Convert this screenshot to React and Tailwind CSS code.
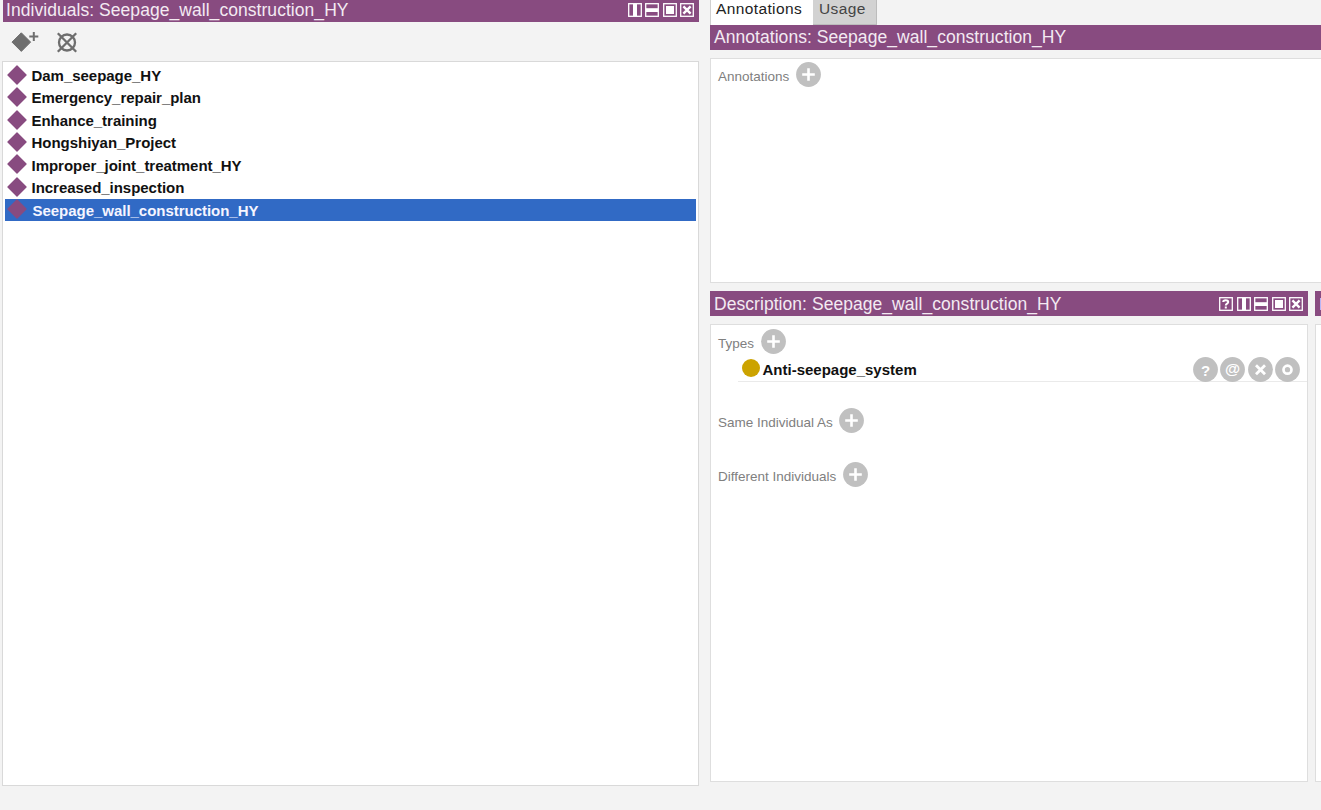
import React from 'react';

const INDIVIDUALS = [
  'Dam_seepage_HY',
  'Emergency_repair_plan',
  'Enhance_training',
  'Hongshiyan_Project',
  'Improper_joint_treatment_HY',
  'Increased_inspection',
  'Seepage_wall_construction_HY'
];

const SELECTED = 'Seepage_wall_construction_HY';

const HeaderIcon = ({ type }) => (
  <svg width="14" height="14" viewBox="0 0 14 14" fill="none" className="block shrink-0">
    <rect x="0.7" y="0.7" width="12.6" height="12.6" stroke="#fff" strokeWidth="1.3" />
    {type === 'help' && (
      <path d="M4.2 5C4.2 2.8 9.2 2.8 9.2 5C9.2 6.8 6.8 6.6 6.8 8.5M6.8 9.4V11.4" stroke="#fff" strokeWidth="2" />
    )}
    {type === 'vertical' && <rect x="5" y="1" width="4" height="12" fill="#fff" />}
    {type === 'horizontal' && <rect x="1" y="5.2" width="12" height="3.8" fill="#fff" />}
    {type === 'float' && <rect x="3" y="3" width="8" height="8" fill="#fff" />}
    {type === 'close' && <path d="M3.4 3.4L10.6 10.6M10.6 3.4L3.4 10.6" stroke="#fff" strokeWidth="2.4" />}
  </svg>
);

const PanelHeader = ({ title, icons = [], className = '' }) => (
  <div className={`flex items-center justify-between bg-[#884b80] text-[#f3eaf2] shrink-0 ${className}`}>
    <span className="text-[17.5px] leading-5 tracking-[0.05px] whitespace-pre">{title}</span>
    <div className="flex gap-[3.5px]">
      {icons.map((icon) => (
        <HeaderIcon key={icon} type={icon} />
      ))}
    </div>
  </div>
);

const CircleButton = ({ type }) => (
  <svg width="25" height="25" viewBox="0 0 25 25" fill="none" className="block shrink-0">
    <circle cx="12.5" cy="12.5" r="12.4" fill="#c0c0c0" />
    {type === 'add' && <path d="M12.5 6.2V18.8M6.2 12.5H18.8" stroke="#fff" strokeWidth="2.6" />}
    {type === 'remove' && <path d="M8 8.2L17 17.2M17 8.2L8 17.2" stroke="#fff" strokeWidth="2.8" />}
    {type === 'edit' && <circle cx="12.5" cy="12.7" r="4" stroke="#fff" strokeWidth="2.7" />}
    {type === 'help' && (
      <text x="12.5" y="19.2" textAnchor="middle" fill="#fff" fontSize="15" fontWeight="bold">?</text>
    )}
    {type === 'annotate' && (
      <text x="12.5" y="17.2" textAnchor="middle" fill="#fff" fontSize="15.5" fontWeight="bold">@</text>
    )}
  </svg>
);

const Diamond = () => (
  <svg width="20" height="20" viewBox="0 0 20 20" className="block shrink-0">
    <path d="M10 1L19 10L10 19L1 10Z" fill="#884b80" stroke="#884b80" strokeWidth="1.4" strokeLinejoin="round" />
  </svg>
);

const SectionLabel = ({ label, className = '' }) => (
  <div className={`flex items-center gap-[6.6px] h-[25px] ${className}`}>
    <span className="text-[13.5px] leading-4 text-[#808080] pt-[4px]">{label}</span>
    <CircleButton type="add" />
  </div>
);

const IndividualsPanel = () => (
  <div className="w-[697px] h-[786px] flex flex-col shrink-0">
    <PanelHeader
      title={'Individuals: ' + SELECTED}
      icons={['vertical', 'horizontal', 'float', 'close']}
      className="h-[22px] ml-px pl-[3px] pr-[5px] pb-0.5"
    />
    {/* Toolbar */}
    <div className="h-[39px] flex items-start pl-[9px] pt-[9px] gap-[16px] shrink-0">
      <svg width="29" height="24" viewBox="0 0 29 24" className="block">
        <path d="M10.3 1.8L19.6 11.1L10.3 20.4L1 11.1Z" fill="#6e6e6e" stroke="#6e6e6e" strokeLinejoin="round" />
        <path d="M22.8 1V10M18.3 5.5H27.3" stroke="#6e6e6e" strokeWidth="2" />
      </svg>
      <svg width="22" height="24" viewBox="0 0 22 24" fill="none" stroke="#6e6e6e" strokeWidth="2.3" className="block">
        <circle cx="11" cy="11.5" r="8" />
        <path d="M1.8 2.3L20.2 20.7M20.2 2.3L1.8 20.7" />
      </svg>
    </div>
    <div className="flex-1 bg-white border border-[#d9d9d9] pt-[2px] px-[2px]">
      {INDIVIDUALS.map((name) => (
        <div
          key={name}
          className={`h-[22.45px] flex items-center ${
            name === SELECTED ? 'bg-[#316ac5] text-[#f5f5ff] gap-[6px]' : 'text-[#111] gap-[5px]'
          }`}
        >
          <div className="ml-[1.5px] pb-px">
            <Diamond />
          </div>
          <span className="text-[15px] leading-5 font-bold tracking-[-0.03px] pt-[1.6px]">{name}</span>
        </div>
      ))}
    </div>
  </div>
);

const AnnotationsPanel = () => (
  <div className="h-[283px] flex flex-col shrink-0">
    <div className="flex h-[25px] text-[15.5px] leading-[18px] tracking-[0.38px]">
      <div className="w-[103px] bg-white border-l border-[#d0d0d0] pl-[5px] text-[#222]">Annotations</div>
      <div className="w-[64px] bg-[#d2d2d2] border-r border-b border-[#bcbcbc] pl-[6px] text-[#444]">Usage</div>
    </div>
    <PanelHeader title={'Annotations: ' + SELECTED} className="h-[25px] pl-[4px] pb-px" />
    <div className="flex-1 mt-2 bg-white border border-r-0 border-[#dedede] pl-[7px] pt-[3px]">
      <SectionLabel label="Annotations" />
    </div>
  </div>
);

const DescriptionPanel = () => (
  <div className="w-[598px] flex flex-col shrink-0">
    <PanelHeader
      title={'Description: ' + SELECTED}
      icons={['help', 'vertical', 'horizontal', 'float', 'close']}
      className="h-[25px] pl-[4px] pr-[5px]"
    />
    <div className="flex-1 mt-2 bg-white border border-[#dedede] pl-[7px] pt-[4px]">
      <SectionLabel label="Types" />
      <div className="ml-[20px] h-[28px] flex items-center border-b border-[#eaeaea] pr-[7px]">
        <div className="w-[18px] h-[18px] rounded-full bg-[#cca300] ml-[4px] mt-px" />
        <span className="text-[15px] leading-5 font-bold text-[#111] ml-[2.5px] pt-[4px] flex-1">
          Anti-seepage_system
        </span>
        <div className="flex gap-[2.5px] pt-[3px]">
          <CircleButton type="help" />
          <CircleButton type="annotate" />
          <CircleButton type="remove" />
          <CircleButton type="edit" />
        </div>
      </div>
      <SectionLabel label="Same Individual As" className="mt-[26px]" />
      <SectionLabel label="Different Individuals" className="mt-[29px]" />
    </div>
  </div>
);

const App = () => (
  <div className="w-[1321px] h-[810px] bg-[#f3f3f3] overflow-hidden flex pl-[2px] font-['Liberation_Sans',Arial,sans-serif]">
    <IndividualsPanel />
    <div className="ml-[11px] flex-1 min-w-0 h-[782px] flex flex-col">
      <AnnotationsPanel />
      <div className="flex-1 mt-2 flex gap-[7px] overflow-hidden">
        <DescriptionPanel />
        {/* Property assertions panel, cut off by the window edge */}
        <div className="flex-1 flex flex-col">
          <div className="h-[25px] bg-[#884b80] flex justify-end items-center">
            <div className="w-px h-3 bg-[#b9b5f5]" />
          </div>
          <div className="flex-1 mt-2 bg-white border border-r-0 border-[#dedede]" />
        </div>
      </div>
    </div>
  </div>
);

export default App;
